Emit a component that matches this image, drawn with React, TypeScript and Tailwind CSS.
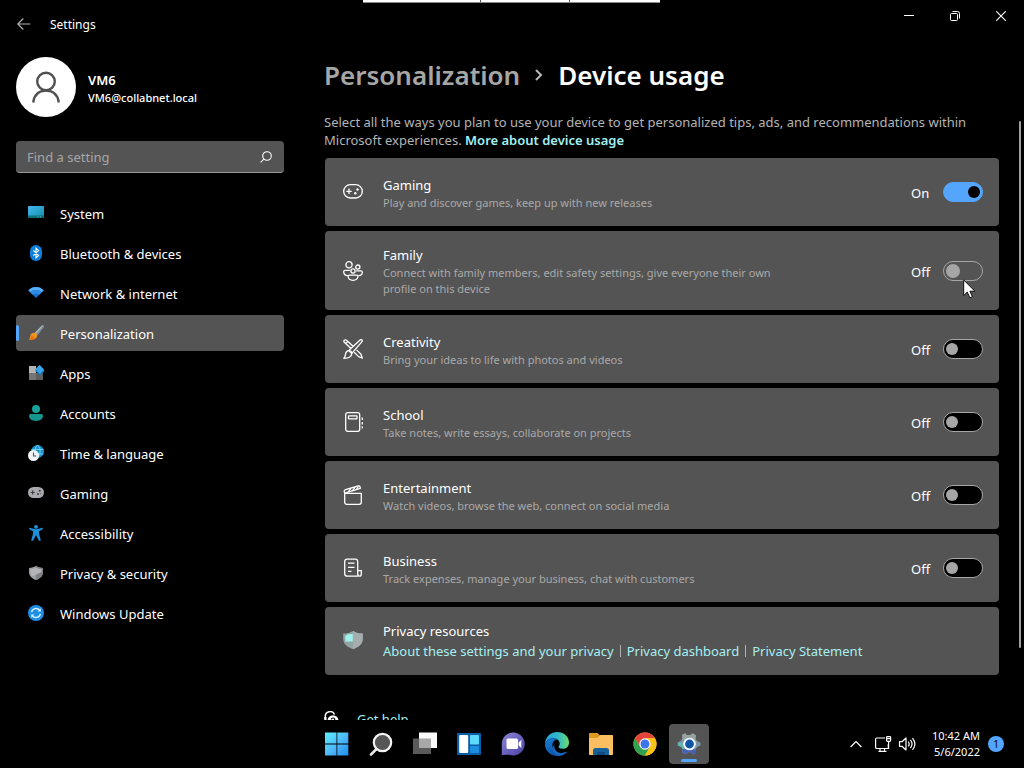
import React, { useState } from "react";

type IconProps = { className?: string };

/* ---------- Sidebar icons ---------- */

const SystemIcon = () => (
  <svg viewBox="0 0 16 16" className="size-4" aria-hidden="true">
    <defs>
      <linearGradient id="sysG" x1="0" y1="0" x2="1" y2="1">
        <stop offset="0" stopColor="#45b8ea" />
        <stop offset="0.5" stopColor="#2ba3cf" />
        <stop offset="1" stopColor="#128fa0" />
      </linearGradient>
    </defs>
    <rect x="0" y="1" width="16" height="12" rx="0.8" fill="url(#sysG)" />
    <path d="M0 10.400h16v1.800a.8.8 0 0 1-.8.8H.8a.8.8 0 0 1-.8-.8z" fill="#0c6f78" />
    <path d="M9.500 11.800h1M12 11.800h1" stroke="#5fd0d0" strokeWidth="0.8" />
  </svg>
);

const BluetoothIcon = () => (
  <svg viewBox="0 0 16 16" className="size-4" aria-hidden="true">
    <rect x="2" y="0" width="12" height="16" rx="6" fill="#0f7fdc" />
    <path d="M5.300 5.300 10.600 10.400 8 12.800V3.200l2.600 2.400-5.300 5.100" fill="none" stroke="#fff" strokeWidth="1.100" />
  </svg>
);

const NetworkIcon = () => (
  <svg viewBox="0 0 16 16" className="size-4" aria-hidden="true">
    <path d="M0.300 5.300C4.500.800 11.500.800 15.700 5.300L8 13z" fill="#1c6fd0" />
    <path d="M0.300 5.300C4.500.800 11.500.800 15.700 5.300l-2 2C10.500 4.300 5.500 4.300 2.300 7.300z" fill="#54b0f8" />
    <path d="M2.300 7.300C5.500 4.300 10.500 4.300 13.700 7.300l-2.400 2.400c-2-1.600-4.600-1.600-6.600 0z" fill="#2f8ce6" />
  </svg>
);

const BrushIcon = () => (
  <svg viewBox="0 0 16 16" className="size-4" aria-hidden="true">
    <path d="M15.300 0.500c.7.600.400 1.400 0 2L9 10.500 6.300 8.200 13.300 1c.6-.6 1.300-1.100 2-.5z" fill="#a9b9c0" />
    <path d="M15.300 0.500c.7.600.400 1.400 0 2L9 10.500 7.800 9.400z" fill="#7a8b93" />
    <path d="M5.600 7.800c1.700-.1 3.700 1.500 3.400 3.300-.5 3-4.500 4-8.500 3.500 1.700-.9 1.300-2.300 1.900-4.200.5-1.600 1.700-2.500 3.200-2.600z" fill="#f5941e" />
    <path d="M4 9.500c-1.100 1.800-.6 3.600-3.500 5.100 4 .5 7-.2 8.100-2.200-1.500.8-3.700.2-4.600-2.900z" fill="#e07812" />
  </svg>
);

const AppsIcon = () => (
  <svg viewBox="0 0 16 16" className="size-4" aria-hidden="true">
    <rect x="1" y="1" width="7" height="7" fill="#b4b4b4" />
    <rect x="1" y="8" width="7" height="7" fill="#757575" />
    <rect x="8" y="8" width="7" height="7" fill="#5e5e5e" />
    <path d="M11.500 0 16 4.500V6.500L12 10.500 7.500 6V4z" fill="#1879c6" />
    <path d="M11.500 0 16 4.600 12 8.700 7.500 4.200z" fill="#39a5e8" />
  </svg>
);

const AccountsIcon = () => (
  <svg viewBox="0 0 16 16" className="size-4" aria-hidden="true">
    <circle cx="8" cy="4" r="4" fill="#17a398" />
    <path d="M2.800 9h10.400A1.800 1.800 0 0 1 15 10.800C15 14 12 16 8 16s-7-2-7-5.200A1.800 1.800 0 0 1 2.800 9z" fill="#17958f" />
  </svg>
);

const TimeIcon = () => (
  <svg viewBox="0 0 16 16" className="size-4" aria-hidden="true">
    <circle cx="9.500" cy="6.500" r="6.500" fill="#1b93cf" />
    <path d="M3.500 4.500h12M9.500 0c-4 4-2 9 0 13M9.500 0c4 4 3 9 0 13M4 9h11.500" fill="none" stroke="#6fd6f2" strokeWidth="0.900" />
    <circle cx="5.500" cy="10.500" r="5.500" fill="#f2f5f7" />
    <path d="M5.500 7.500v3.500h2.800" fill="none" stroke="#4a5560" strokeWidth="1.100" />
  </svg>
);

const GamingIcon = () => (
  <svg viewBox="0 0 16 16" className="size-4" aria-hidden="true">
    <rect x="0" y="2" width="16" height="11" rx="5.500" fill="#a9a9ae" />
    <path d="M2.700 7.500h4M4.700 5.500v4" stroke="#3c3c42" strokeWidth="1.200" />
    <circle cx="11.800" cy="5.700" r="1" fill="#3c3c42" />
    <circle cx="10" cy="9" r="1" fill="#3c3c42" />
    <circle cx="12.600" cy="8.600" r="0.700" fill="#5c5c64" />
  </svg>
);

const AccessibilityIcon = () => (
  <svg viewBox="0 0 16 16" className="size-4" aria-hidden="true">
    <circle cx="8" cy="1.900" r="1.900" fill="#2396e0" />
    <path d="M1.300 3.200c.4-.5.900-.5 1.500-.2C6 4.500 10 4.500 13.200 3c.6-.3 1.100-.3 1.500.2.300.6.100 1.100-.5 1.400L11 6.200v2.600l1.600 5.600c.2.700-.1 1.200-.6 1.400-.7.200-1.200 0-1.500-.7L8.300 10.500h-.6l-2.200 4.600c-.3.700-.8.900-1.500.7-.5-.2-.8-.7-.6-1.400L5 8.800V6.200L1.800 4.600c-.6-.3-.8-.8-.5-1.400z" fill="#1b8fdc" />
  </svg>
);

const ShieldIcon = () => (
  <svg viewBox="0 0 16 16" className="size-4" aria-hidden="true">
    <path d="M8 0.800c2 1.400 4.300 2.100 7 2.100V7c0 4-2.900 6.500-7 8-4.100-1.500-7-4-7-8V2.900c2.700 0 5-.7 7-2.100z" fill="#9a9da1" />
    <path d="M8 0.800c2 1.400 4.300 2.100 7 2.100V7c0 4-2.900 6.500-7 8z" fill="#7f8286" />
    <path d="M8 2.500c1.600 1 3.400 1.500 5.500 1.600V7L4 11.500C2.900 10.200 2.500 8.700 2.500 7V4.100C4.600 4 6.400 3.500 8 2.500z" fill="#b2b5b8" />
  </svg>
);

const UpdateIcon = () => (
  <svg viewBox="0 0 16 16" className="size-4" aria-hidden="true">
    <circle cx="8" cy="8" r="8" fill="#1f8fe6" />
    <path d="M3.600 7.200A4.600 4.600 0 0 1 11.800 5.400M12.400 8.800A4.600 4.600 0 0 1 4.200 10.600" fill="none" stroke="#d8f1ff" strokeWidth="1.400" />
    <path d="M12.800 3.200v3.300H9.500zM3.200 12.800V9.500h3.300z" fill="#d8f1ff" />
  </svg>
);

/* ---------- Card icons ---------- */

const lineIcon = "size-5 shrink-0 text-white";

const PadIcon = () => (
  <svg viewBox="0 0 20 20" className={lineIcon} fill="none" stroke="currentColor" strokeWidth="1.300" aria-hidden="true">
    <rect x="0.700" y="2.700" width="18.600" height="13.300" rx="6.600" />
    <path d="M3.300 9.300h5.400M6 6.600v5.400" />
    <circle cx="14.500" cy="7.500" r="1.200" fill="currentColor" stroke="none" />
    <circle cx="12.300" cy="11.300" r="1.200" fill="currentColor" stroke="none" />
  </svg>
);

const FamilyIcon = () => (
  <svg viewBox="0 0 20 20" className={lineIcon} fill="none" stroke="currentColor" strokeWidth="1.300" aria-hidden="true">
    <circle cx="6" cy="3.800" r="3.100" />
    <circle cx="14.800" cy="6.100" r="2.100" />
    <circle cx="10" cy="10" r="2.100" />
    <path d="M6.800 9.300H2.200c-.9 0-1.500.6-1.500 1.500 0 2.200 1.400 3.700 4 3.900M13.200 9.800h4.700c.9 0 1.400.6 1.400 1.400 0 2-1.400 3.300-3.700 3.500M6.400 14.100h7.200c.9 0 1.400.6 1.300 1.400-.3 2.400-2.200 3.800-4.900 3.800s-4.600-1.400-4.900-3.800c-.1-.8.400-1.400 1.300-1.400z" />
  </svg>
);

const CreativityIcon = () => (
  <svg viewBox="0 0 20 20" className={lineIcon} fill="none" stroke="currentColor" strokeWidth="1.300" strokeLinejoin="round" aria-hidden="true">
    <path d="M17.100 1.100c.7-.6 1.400-.5 1.800-.1s.5 1.100-.1 1.800L8.800 14.400 5.700 11.600z" />
    <path d="M5.700 11.600c1.700 0 3.100 1.300 3.100 3-.1 3.200-3.500 4.900-8.100 4.600 1.700-1.200 1.400-2.500 1.900-4.600.4-1.700 1.500-3 3.100-3z" />
    <path d="M7.800 9.300 1.600 3.600C.8 2.800.7 1.900 1.300 1.300s1.700-.6 2.500.2l6 5.600M2.600 4.800 5 2.400M11.200 13.300l4.400 4.300 3.700 1.600-1.300-4-4.500-4.300" />
  </svg>
);

const SchoolIcon = () => (
  <svg viewBox="0 0 20 20" className={lineIcon} fill="none" stroke="currentColor" strokeWidth="1.300" aria-hidden="true">
    <rect x="2.700" y="0.700" width="14" height="18.600" rx="2" />
    <rect x="5.500" y="3.900" width="8.500" height="3" rx="0.500" />
    <path d="M19.300 5.500v2.400M19.300 10v2.400M19.300 14.300v2.200" />
  </svg>
);

const MovieIcon = () => (
  <svg viewBox="0 0 20 20" className={lineIcon} fill="none" stroke="currentColor" strokeWidth="1.300" strokeLinejoin="round" aria-hidden="true">
    <path d="M1.700 8.300h16.600v8.900c0 1.200-.9 2.100-2.100 2.100H3.800c-1.200 0-2.100-.9-2.100-2.100z" />
    <path d="M1.700 8.200 1.300 6.900C1 6 1.500 5 2.500 4.700L15.300.9c.8-.2 1.500.2 1.700.9l.4 1.500L1.700 8.200" />
    <path d="M5.300 7 8 3.200M9.500 5.700l2.700-3.800M13.600 4.400l1.700-3.300" />
  </svg>
);

const BusinessIcon = () => (
  <svg viewBox="0 0 20 20" className={lineIcon} fill="none" stroke="currentColor" strokeWidth="1.300" aria-hidden="true">
    <path d="M15.200 18.200H4.400c-1.500 0-2.700-1.200-2.700-2.700V3.400c0-1.300 1-2.300 2.300-2.300h8.400c1.300 0 2.300 1 2.300 2.300v12.400c0 1.300.7 2.400 1.800 2.400s1.800-.9 1.800-2.200v-3.400h-3.600" />
    <path d="M5 5.200h6.500M5 9.300h6.500M5 13.300h3.500" />
  </svg>
);

const PrivacyIcon = () => (
  <svg viewBox="0 0 20 20" className="size-5 shrink-0" aria-hidden="true">
    <path d="M10 0c2.500 1.700 5.800 2.600 9.800 2.600v5.200c0 5.200-3.800 8.300-9.800 10.400C4 16.100.2 13 .2 7.800V2.600C4.200 2.600 7.500 1.700 10 0z" fill="#92a3a3" />
    <path d="M10 0c2.500 1.700 5.800 2.600 9.800 2.600v5.200c0 5.200-3.800 8.300-9.800 10.400z" fill="#a5adad" />
    <path d="M4.500 3.300 9.800 3v7.500H2.300V5.300z" fill="#9ff2ee" />
  </svg>
);

/* ---------- Taskbar icons ---------- */

const StartIcon = () => (
  <svg viewBox="0 0 24 24" className="size-6" aria-hidden="true">
    <defs>
      <linearGradient id="winG" x1="0" y1="0" x2="1" y2="1">
        <stop offset="0" stopColor="#5cf0ff" />
        <stop offset="0.550" stopColor="#4db5f8" />
        <stop offset="1" stopColor="#1f8df0" />
      </linearGradient>
    </defs>
    <path d="M0 .500h11.500v11H0zM12.300.500h11v11h-11zM0 12.500h11.500v11H0zM12.300 12.500h11v11h-11z" fill="url(#winG)" />
  </svg>
);

const SearchTaskIcon = () => (
  <svg viewBox="0 0 24 24" className="size-6" aria-hidden="true">
    <path d="M7.500 17 2 22.500" stroke="#e8e8e8" strokeWidth="2.600" strokeLinecap="round" />
    <circle cx="13.500" cy="10.500" r="8.700" fill="#565656" stroke="#f4f4f4" strokeWidth="2.200" />
  </svg>
);

const TaskViewIcon = () => (
  <svg viewBox="0 0 24 24" className="size-6" aria-hidden="true">
    <rect x="0" y="6.500" width="18" height="15.500" fill="#5a5a5a" />
    <rect x="6" y="0.500" width="18" height="15.500" fill="#fafafa" />
    <rect x="6" y="6.500" width="12" height="9.500" fill="#a8a8a8" />
  </svg>
);

const WidgetsIcon = () => (
  <svg viewBox="0 0 24 24" className="size-6" aria-hidden="true">
    <rect x="0" y="1" width="24" height="22" rx="1" fill="#0a5ea8" />
    <rect x="2.200" y="3" width="9" height="18" rx="1" fill="#fff" />
    <rect x="13" y="3" width="9" height="9.500" rx="0.800" fill="#5fd9fb" />
    <rect x="13" y="14" width="9" height="7" rx="0.800" fill="#1d8fe0" />
  </svg>
);

const ChatIcon = () => (
  <svg viewBox="0 0 24 24" className="size-6" aria-hidden="true">
    <defs>
      <linearGradient id="chatG" x1="0" y1="0" x2="1" y2="1">
        <stop offset="0" stopColor="#8c86d8" />
        <stop offset="1" stopColor="#4a42a4" />
      </linearGradient>
    </defs>
    <path d="M12.300 .5A11.500 11.500 0 1 1 8 22.700L.8 23V12A11.500 11.500 0 0 1 12.300 .5z" fill="url(#chatG)" />
    <rect x="5.500" y="6.500" width="11.500" height="10.500" rx="1.500" fill="#fff" />
    <path d="M17.600 10.500 20.300 8v8l-2.700-2.500z" fill="#fff" />
  </svg>
);

const EdgeIcon = () => (
  <svg viewBox="0 0 24 24" className="size-6" aria-hidden="true">
    <defs>
      <linearGradient id="edgeA" x1="0" y1="0.300" x2="1" y2="0.300">
        <stop offset="0" stopColor="#2a9fe0" />
        <stop offset="0.550" stopColor="#2fb8c8" />
        <stop offset="1" stopColor="#6be06a" />
      </linearGradient>
      <linearGradient id="edgeB" x1="0" y1="0" x2="0.600" y2="1">
        <stop offset="0" stopColor="#1680d6" />
        <stop offset="1" stopColor="#0c4ca0" />
      </linearGradient>
    </defs>
    <path d="M12 0c7.200 0 12 5 12 10.500 0 4.200-3 6.300-6 6.300-3.600 0-5-1.400-4.400-2.300.9-1 1.100-1.900 1.100-2.900C14.700 8.300 11.600 6.200 8.300 6.200 4.200 6.200.8 8.400 0 12 0 5.400 5.400 0 12 0z" fill="url(#edgeA)" />
    <path d="M0 12c.8-3.600 4.200-5.800 8.300-5.800 1.600 0 3.200.5 4.400 1.400-2.900-.3-5.300 2.200-5.300 5.700 0 4.300 3.700 8.200 8.600 8.200 2 0 3.600-.6 5-1.400.4-.2.800.2.500.6A12 12 0 0 1 12 24C5.400 24 0 18.600 0 12z" fill="url(#edgeB)" />
    <path d="M9.500 12.500c-1.300 4.500 2.500 9 7.500 8.500 1.600-.2 3-.6 4-1.200.4-.1.700.2.400.7A12 12 0 0 1 14 23.800C8 22.500 5.600 16.500 9.500 12.500z" fill="#1769c0" />
  </svg>
);

const FolderIcon = () => (
  <svg viewBox="0 0 24 24" className="size-6" aria-hidden="true">
    <path d="M0 2c0-.6.4-1 1-1h7.500L11 3.500V8H0z" fill="#e0981f" />
    <path d="M0 6h8.500L11 3h12c.6 0 1 .4 1 1v18c0 .6-.4 1-1 1H1c-.6 0-1-.4-1-1z" fill="#fbbf62" />
    <path d="M4 23v-4.500c0-1.400 1-2.500 2.500-2.500h11c1.500 0 2.500 1.100 2.500 2.500V23z" fill="#17609c" />
    <path d="M8 23v-3h8v3z" fill="#0f4a80" />
  </svg>
);

const ChromeIcon = () => (
  <svg viewBox="0 0 24 24" className="size-6" aria-hidden="true">
    <circle cx="12" cy="12" r="11.500" fill="#fbc116" />
    <path d="M2.040 6.250A11.500 11.500 0 0 1 21.960 6.250H12L7.020 14.870z" fill="#e5453b" />
    <path d="M2.040 6.250A11.500 11.500 0 0 0 12 23.500L16.980 14.870H7.020z" fill="#2fa24f" />
    <path d="M21.960 6.250H12L16.980 14.870 12 23.500A11.500 11.500 0 0 0 21.960 6.250z" fill="#fbc116" />
    <circle cx="12" cy="12" r="5.700" fill="#fff" />
    <circle cx="12" cy="12" r="4.500" fill="#3f73e8" />
  </svg>
);

const GearIcon = () => (
  <svg viewBox="0 0 24 24" className="size-6" aria-hidden="true">
    <path d="M9.600 3 8.200 1.200 5.200 2.800 5.500 6 4.300 8.200.8 10.500v3l3.500 1.400 1.300 2.300-.3 3.600 3 1.700 2.500-2.200h2.800l2.500 2.200 3-1.700-.4-3.600 1.500-2.300 3.200-1.400v-3l-3.200-1.300-1.500-2.300.4-3.400-3-2L13.500 3z" fill="#7d94a4" />
    <path d="M5.200 2.800 8.200 1.200 9.600 3h3.900l2.200-1.800 3 2-.4 3.400-1 1.500H5.400z" fill="#97a39f" />
    <path d="M.8 10.500v3l3.500 1.400 1.300 2.300 6.400-5.200z" fill="#64b6ae" />
    <path d="M5.600 17.200l-.3 3.600 3 1.700 2.500-2.200h2.800l2.500 2.200 3-1.700-.4-3.600z" fill="#4660b4" />
    <circle cx="12.500" cy="12" r="6.300" fill="#f2f7ff" />
    <circle cx="12.500" cy="12" r="4.400" fill="#0d55a4" />
  </svg>
);

const TrayNetworkIcon = () => (
  <svg viewBox="0 0 18 18" className="h-[18px] w-[18px]" fill="none" stroke="#fff" strokeWidth="1.200" aria-hidden="true">
    <path d="M11 3H2.800c-.7 0-1.200.5-1.200 1.200v8.300c0 .6.500 1 1.200 1h11.500V9M6 13.500v2.800M10.500 13.500v2.800M4.500 16.400h8" />
    <rect x="12.600" y="1.600" width="4" height="4.800" rx="0.800" />
    <path d="M12.600 3.700h4M14.600 6.400V14" />
  </svg>
);

const SpeakerIcon = () => (
  <svg viewBox="0 0 18 18" className="h-[18px] w-[18px]" fill="none" stroke="#fff" strokeWidth="1.200" aria-hidden="true">
    <path d="M1.500 6.700H4L8 3v12l-4-3.700H1.500z" strokeLinejoin="round" />
    <path d="M10.300 6.600c1.100 1.500 1.100 3.300 0 4.800M12.400 4.900c2 2.500 2 5.700 0 8.200M14.500 3.200c2.900 3.500 2.900 8.100 0 11.600" />
  </svg>
);

const HelpIcon = ({ className }: IconProps) => (
  <svg viewBox="0 0 16 16" className={className} aria-hidden="true">
    <path d="M1.300 8.500V5.500a4.800 4.800 0 0 1 9.200-2" fill="none" stroke="#fff" strokeWidth="1.500" />
    <path d="M.3 6h2.200v3.500H.3z" fill="#fff" />
    <circle cx="9" cy="9.700" r="5.500" fill="#fff" />
    <path d="M7.300 8.600c0-2.200 3.500-2.200 3.500 0 0 1.200-1.700 1.300-1.700 2.600M9.100 12v1" fill="none" stroke="#000" strokeWidth="1.100" />
  </svg>
);

/* ---------- Data ---------- */

const navItems = [
  { label: "System", Icon: SystemIcon },
  { label: "Bluetooth & devices", Icon: BluetoothIcon },
  { label: "Network & internet", Icon: NetworkIcon },
  { label: "Personalization", Icon: BrushIcon, active: true },
  { label: "Apps", Icon: AppsIcon },
  { label: "Accounts", Icon: AccountsIcon },
  { label: "Time & language", Icon: TimeIcon },
  { label: "Gaming", Icon: GamingIcon },
  { label: "Accessibility", Icon: AccessibilityIcon },
  { label: "Privacy & security", Icon: ShieldIcon },
  { label: "Windows Update", Icon: UpdateIcon },
];

const usages = [
  { id: "gaming", title: "Gaming", text: "Play and discover games, keep up with new releases", Icon: PadIcon, on: true },
  { id: "family", title: "Family", text: "Connect with family members, edit safety settings, give everyone their own profile on this device", Icon: FamilyIcon, pointed: true },
  { id: "creativity", title: "Creativity", text: "Bring your ideas to life with photos and videos", Icon: CreativityIcon },
  { id: "school", title: "School", text: "Take notes, write essays, collaborate on projects", Icon: SchoolIcon },
  { id: "entertainment", title: "Entertainment", text: "Watch videos, browse the web, connect on social media", Icon: MovieIcon },
  { id: "business", title: "Business", text: "Track expenses, manage your business, chat with customers", Icon: BusinessIcon },
];

const taskbar = [
  { label: "Start", Icon: StartIcon },
  { label: "Search", Icon: SearchTaskIcon },
  { label: "Task View", Icon: TaskViewIcon },
  { label: "Widgets", Icon: WidgetsIcon },
  { label: "Chat", Icon: ChatIcon },
  { label: "Microsoft Edge", Icon: EdgeIcon },
  { label: "File Explorer", Icon: FolderIcon },
  { label: "Google Chrome", Icon: ChromeIcon },
  { label: "Settings", Icon: GearIcon, active: true },
];

/* ---------- Pieces ---------- */

type UsageProps = (typeof usages)[number];

const switchBase =
  "block h-5 w-10 cursor-default appearance-none rounded-full border border-[#a6a6a6] before:block before:rounded-full before:bg-[#a6a6a6] checked:border-[#54a6fc] checked:bg-[#54a6fc] checked:before:ml-6 checked:before:bg-black";

function UsageCard({ id, title, text, Icon, on, pointed }: UsageProps) {
  const [checked, setChecked] = useState(Boolean(on));
  return (
    <li className="flex min-h-[68px] items-center rounded bg-[#545454] py-[13px] pr-4 pl-[18px]">
      <Icon />
      <label htmlFor={id} className="ml-5 flex-1">
        <span className="block pt-0.5 text-[13px] leading-[19px] text-white">{title}</span>
        <span className="block max-w-[420px] text-[11px] leading-4 text-[#a9a9a9]">{text}</span>
      </label>
      <span className="w-8 pt-0.5 text-[13px] leading-5 text-white">{checked ? "On" : "Off"}</span>
      <span className="relative">
        <input
          id={id}
          type="checkbox"
          role="switch"
          checked={checked}
          onChange={(e) => setChecked(e.target.checked)}
          className={
            pointed
              ? `${switchBase} bg-[#545454] before:mt-0.5 before:ml-0.5 before:size-3.5`
              : `${switchBase} bg-black before:mt-[3px] before:ml-0.5 before:size-3`
          }
        />
        {pointed && (
          <svg viewBox="0 0 13 20" className="pointer-events-none absolute top-[18px] left-5 h-5 w-[13px]" aria-hidden="true">
            <path d="M.7 1v15.600l3.600-3.500 2.500 5.700 2.600-1.100-2.500-5.500h5z" fill="#fff" stroke="#000" strokeWidth="0.900" />
          </svg>
        )}
      </span>
    </li>
  );
}

export default function App() {
  const link = "text-[#a5f0f0]";
  return (
    <div className="relative flex h-screen flex-col overflow-hidden bg-black font-['Noto_Sans','Open_Sans',sans-serif] text-[13px] text-white">
      <div className="absolute top-0 left-[363px] flex h-[3px] w-[297px] border-b border-[#8a8a8a] bg-white" aria-hidden="true">
        <span className="w-[118px] border-r border-[#555]" />
        <span className="w-[89px] border-r border-[#555]" />
      </div>

      <header className="flex items-start justify-between">
        <div className="flex h-12 items-center pl-4">
          <button type="button" aria-label="Back" className="grid size-4 place-items-center">
            <svg viewBox="0 0 16 16" className="size-4" fill="none" stroke="#b0b0b0" strokeWidth="1.200" aria-hidden="true">
              <path d="M14.300 8H2.300M7.300 2.500 1.800 8l5.500 5.500" />
            </svg>
          </button>
          <h1 className="ml-[18px] pt-0.5 text-[12px] leading-5">Settings</h1>
        </div>
        <div className="flex">
          <button type="button" aria-label="Minimize" className="grid h-8 w-[46px] place-items-center">
            <svg viewBox="0 0 10 10" className="size-2.5" aria-hidden="true">
              <path d="M0 4.500h10" stroke="#fff" />
            </svg>
          </button>
          <button type="button" aria-label="Restore" className="grid h-8 w-[46px] place-items-center">
            <svg viewBox="0 0 10 10" className="size-2.5" fill="none" stroke="#fff" aria-hidden="true">
              <rect x="0.500" y="2.500" width="7" height="7" rx="1" />
              <path d="M2.500.500H7.500a2 2 0 0 1 2 2V7.500" />
            </svg>
          </button>
          <button type="button" aria-label="Close" className="grid h-8 w-[46px] place-items-center">
            <svg viewBox="0 0 10 10" className="size-2.5" stroke="#fff" strokeWidth="1.100" aria-hidden="true">
              <path d="M.3.300l9.400 9.400M9.700.300.300 9.700" />
            </svg>
          </button>
        </div>
      </header>

      <div className="flex min-h-0 flex-1">
        <aside className="w-[300px] shrink-0 px-4 pt-[9px]">
          <div className="flex items-center gap-3">
            <div className="grid size-[60px] place-items-center rounded-full bg-white">
              <svg viewBox="0 0 28 32" className="h-8 w-7" fill="none" stroke="#505050" strokeWidth="2.400" aria-hidden="true">
                <circle cx="14" cy="10.500" r="8.800" />
                <path d="M1.200 31.500C2 24 7 19.500 14 19.500S26 24 26.800 31.500" />
              </svg>
            </div>
            <div className="pt-1">
              <p className="text-[13px] leading-[18px] font-semibold">VM6</p>
              <p className="text-[11px] leading-[18px] font-medium">VM6@collabnet.local</p>
            </div>
          </div>

          <div className="mt-6 flex h-8 items-center rounded border-b border-[#9a9a9a] bg-[#545454] pr-3 pl-[11px]">
            <input
              type="search"
              aria-label="Find a setting"
              placeholder="Find a setting"
              className="min-w-0 flex-1 bg-transparent text-[13px] leading-5 outline-none placeholder:text-[#a6a6a6]"
            />
            <svg viewBox="0 0 12 12" className="size-3" fill="none" stroke="#fff" strokeWidth="1.100" aria-hidden="true">
              <circle cx="7" cy="5" r="4.300" />
              <path d="M3.900 8.100.6 11.400" />
            </svg>
          </div>

          <nav className="mt-[22px] flex flex-col gap-1" aria-label="Settings sections">
            {navItems.map(({ label, Icon, active }) => (
              <a
                key={label}
                href="#"
                aria-current={active ? "page" : undefined}
                className={
                  active
                    ? "relative flex h-9 items-center gap-4 rounded bg-[#545454] pl-3 before:absolute before:top-2.5 before:left-0 before:h-4 before:w-[3px] before:rounded-full before:bg-[#54a6fc]"
                    : "flex h-9 items-center gap-4 rounded pl-3"
                }
              >
                <Icon />
                <span className="pt-1">{label}</span>
              </a>
            ))}
          </nav>
        </aside>

        <main className="min-w-0 flex-1 overflow-hidden pr-[25px] pl-6">
          <nav className="mt-[7px] flex h-10 items-center text-[26px] leading-10 font-semibold" aria-label="Breadcrumb">
            <a href="#" className="text-[#a6a6a6]">Personalization</a>
            <svg viewBox="0 0 8 12" className="mx-[15px] h-3 w-2" fill="none" stroke="#b8b8b8" strokeWidth="2" aria-hidden="true">
              <path d="M1 1l5 5-5 5" />
            </svg>
            <h2>Device usage</h2>
          </nav>
          <p className="mt-[18px] leading-[18px] text-[#b4b4b4]">
            Select all the ways you plan to use your device to get personalized tips, ads, and recommendations within Microsoft
            experiences.{" "}
            <a href="#" className={`${link} font-semibold`}>More about device usage</a>
          </p>

          <ul className="mt-[9px] ml-px flex flex-col gap-[5px]">
            {usages.map((u) => (
              <UsageCard key={u.id} {...u} />
            ))}
            <li className="flex min-h-[68px] items-center rounded bg-[#545454] pr-4 pl-[18px]">
              <PrivacyIcon />
              <div className="ml-5">
                <h3 className="leading-5">Privacy resources</h3>
                <p className="flex leading-5">
                  <a href="#" className={link}>About these settings and your privacy</a>
                  <span className="mx-1.5 my-1 w-px bg-[#b0b0b0]" />
                  <a href="#" className={link}>Privacy dashboard</a>
                  <span className="mx-1.5 my-1 w-px bg-[#b0b0b0]" />
                  <a href="#" className={link}>Privacy Statement</a>
                </p>
              </div>
            </li>
          </ul>

          <a href="#" className={`${link} mt-[34px] flex items-center gap-[17px] leading-5`}>
            <HelpIcon className="size-4" />
            Get help
          </a>
        </main>
        <div className="absolute top-[121px] right-[3px] h-[527px] w-0.5 rounded-full bg-[#a0a0a0]" aria-hidden="true" />
      </div>

      <footer className="grid h-12 shrink-0 grid-cols-[1fr_auto_1fr] items-center bg-black pl-0.5">
        <div className="col-start-2 flex gap-1">
          {taskbar.map(({ label, Icon, active }) => (
            <button
              key={label}
              type="button"
              aria-label={label}
              className={
                active
                  ? "relative grid size-10 place-items-center rounded bg-[#545454] after:absolute after:bottom-0.5 after:h-[3px] after:w-4 after:rounded-full after:bg-[#54a6fc]"
                  : "grid size-10 place-items-center rounded"
              }
            >
              <Icon />
            </button>
          ))}
        </div>
        <div className="flex items-center justify-end pr-5">
          <button type="button" aria-label="Show hidden icons" className="mr-3">
            <svg viewBox="0 0 12 8" className="h-2 w-3" fill="none" stroke="#fff" strokeWidth="1.200" aria-hidden="true">
              <path d="M.6 7 6 1.600 11.400 7" />
            </svg>
          </button>
          <button type="button" aria-label="Network" className="mr-1.5">
            <TrayNetworkIcon />
          </button>
          <button type="button" aria-label="Volume" className="mr-4">
            <SpeakerIcon />
          </button>
          <p className="mr-2 text-right text-[11px] leading-4">
            <time className="block">10:42 AM</time>
            <time className="block">5/6/2022</time>
          </p>
          <span className="grid size-4 place-items-center rounded-full bg-[#54a6fc] text-[10px] leading-4 text-black">1</span>
        </div>
      </footer>
    </div>
  );
}
